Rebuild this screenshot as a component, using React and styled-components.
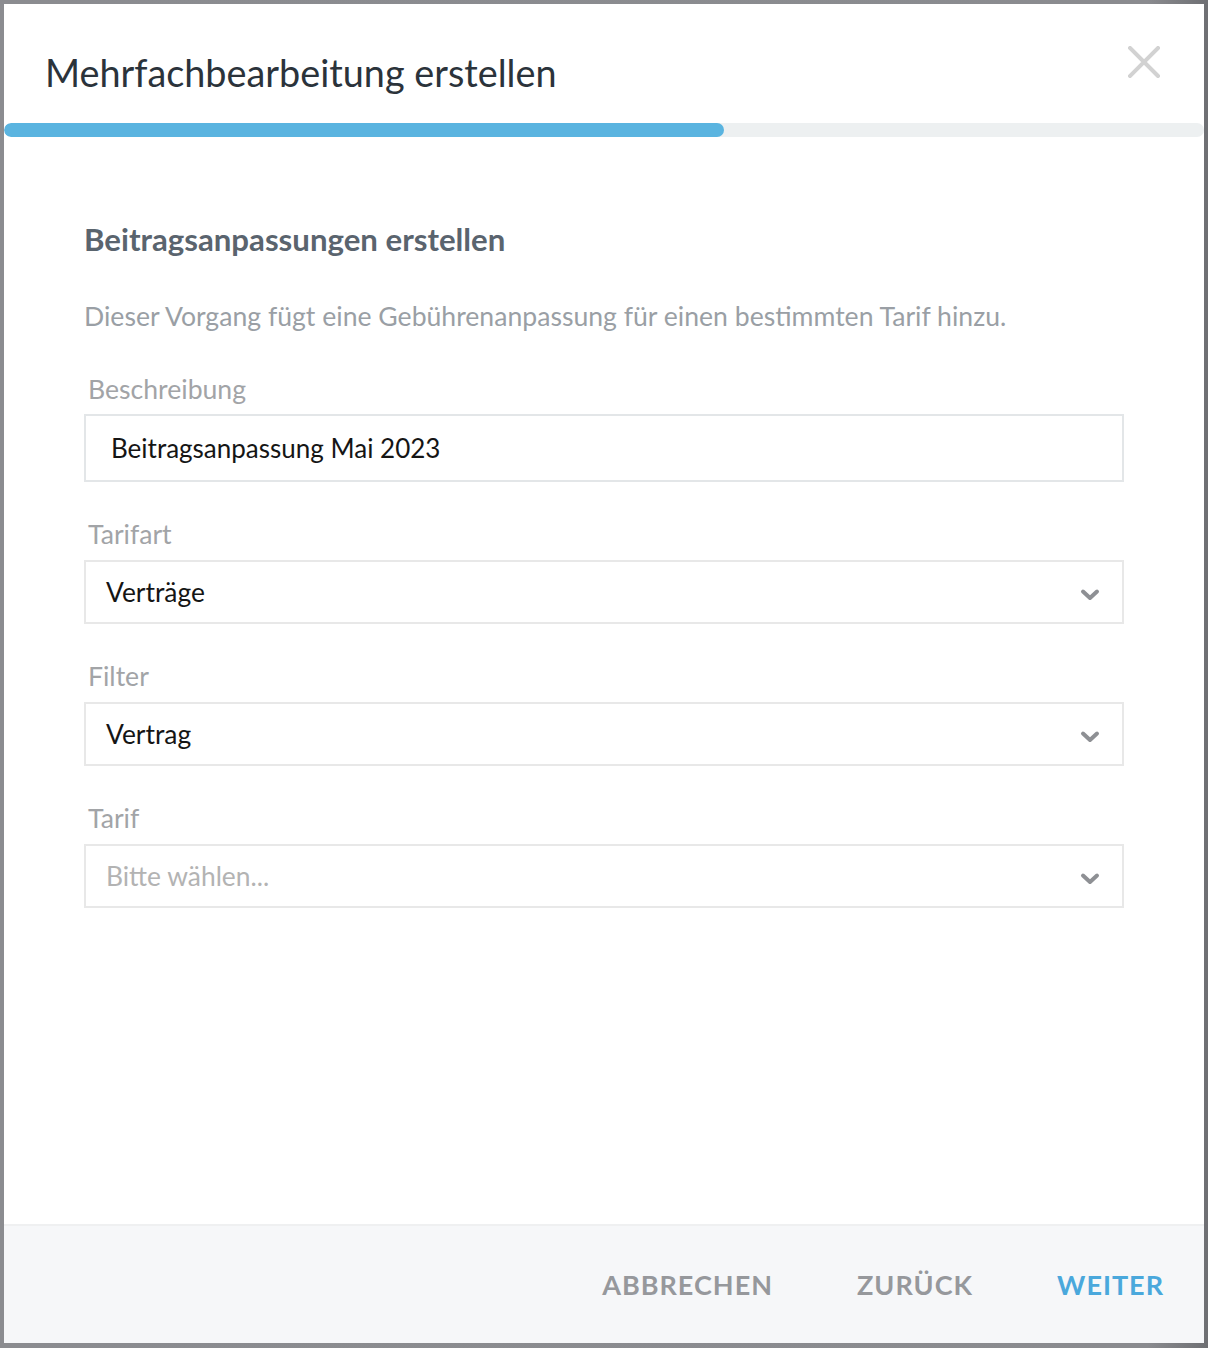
import React from "react";
import styled, { createGlobalStyle } from "styled-components";

const GlobalStyle = createGlobalStyle`
  html, body {
    margin: 0;
    padding: 0;
  }
  body {
    background: linear-gradient(90deg, #8b8c90 0%, #8a8b8f 95%, #6e6f73 100%);
    font-family: Lato, "Open Sans", sans-serif;
  }
`;

const Backdrop = styled.div`
  width: 1208px;
  height: 1348px;
  padding: 4px;
  box-sizing: border-box;
`;

const Modal = styled.div`
  display: flex;
  flex-direction: column;
  width: 1200px;
  height: 1339px;
  background: #ffffff;
`;

const Header = styled.div`
  display: flex;
  align-items: center;
  justify-content: space-between;
  height: 119px;
  padding: 0 40px 0 41px;
  box-sizing: border-box;
`;

const Title = styled.h1`
  margin: 0;
  font-size: 37.8px;
  line-height: 48px;
  font-weight: 400;
  color: #2b333b;
  transform: translateY(9px);
`;

const CloseButton = styled.button`
  display: flex;
  align-items: center;
  justify-content: center;
  width: 40px;
  height: 40px;
  margin-top: -4px;
  padding: 0;
  border: none;
  background: none;
  cursor: pointer;
`;

const Track = styled.div`
  height: 14px;
  border-radius: 7px;
  background: #edf0f1;
  overflow: hidden;
`;

const Fill = styled.div`
  height: 100%;
  border-radius: 7px;
  background: #5ab4e0;
`;

const Body = styled.div`
  flex: 1;
  padding: 84px 80px 0 80px;
`;

const Heading = styled.h2`
  margin: 0;
  font-size: 31.2px;
  line-height: 36px;
  font-weight: 700;
  color: #5a646e;
`;

const Description = styled.p`
  margin: 41px 0 0 0;
  font-size: 26.6px;
  line-height: 36px;
  color: #9a9fa5;
`;

const Field = styled.div`
  display: flex;
  flex-direction: column;
  margin-top: ${(p) => p.$gap}px;
`;

const Label = styled.label`
  padding-left: 4px;
  font-size: 26.6px;
  line-height: 36px;
  color: #a2a4a7;
`;

const TextInput = styled.div`
  display: flex;
  align-items: center;
  height: 68px;
  margin-top: 7px;
  padding: 0 25px;
  border: 2px solid #e3e6e8;
  box-sizing: border-box;
  font-size: 26px;
  color: #151515;
`;

const Select = styled.div`
  display: flex;
  align-items: center;
  justify-content: space-between;
  height: 64px;
  margin-top: 8px;
  padding: 0 22px 0 20px;
  border: 2px solid #e8e8e8;
  box-sizing: border-box;
  font-size: 26.4px;
  color: ${(p) => (p.$placeholder ? "#b3b3b3" : "#151515")};
`;

const ChevronBox = styled.span`
  display: flex;
  margin-top: 5px;
`;

const Footer = styled.div`
  display: flex;
  align-items: center;
  justify-content: flex-end;
  gap: 84px;
  height: 119px;
  padding-right: 40px;
  border-top: 2px solid #eff0f1;
  background: #f6f7f9;
  box-sizing: border-box;
`;

const FooterButton = styled.button`
  padding: 0;
  border: none;
  background: none;
  font-family: inherit;
  font-size: 27px;
  font-weight: 700;
  letter-spacing: 1px;
  color: ${(p) => (p.$primary ? "#4aa8dc" : "#96989c")};
  cursor: pointer;
`;

const Chevron = () => (
  <svg width="20" height="14" viewBox="0 0 20 14">
    <path
      d="M3 3.5 L10 10 L17 3.5"
      fill="none"
      stroke="#8e9094"
      strokeWidth="4"
      strokeLinecap="round"
      strokeLinejoin="round"
    />
  </svg>
);

const CloseIcon = () => (
  <svg width="32" height="32" viewBox="0 0 32 32">
    <path
      d="M2 2 L30 30 M30 2 L2 30"
      stroke="#d2d2d2"
      strokeWidth="4"
      strokeLinecap="square"
    />
  </svg>
);

const fields = [
  { label: "Tarifart", value: "Verträge" },
  { label: "Filter", value: "Vertrag" },
  { label: "Tarif", value: "Bitte wählen...", placeholder: true },
];

export default function App() {
  const progress = 60;
  return (
    <>
      <GlobalStyle />
      <Backdrop>
        <Modal>
          <Header>
            <Title>Mehrfachbearbeitung erstellen</Title>
            <CloseButton aria-label="Schließen">
              <CloseIcon />
            </CloseButton>
          </Header>
          <Track>
            <Fill style={{ width: `${progress}%` }} />
          </Track>
          <Body>
            <Heading>Beitragsanpassungen erstellen</Heading>
            <Description>
              Dieser Vorgang fügt eine Gebührenanpassung für einen bestimmten Tarif hinzu.
            </Description>
            <Field $gap={37}>
              <Label>Beschreibung</Label>
              <TextInput>Beitragsanpassung Mai 2023</TextInput>
            </Field>
            {fields.map((f) => (
              <Field key={f.label} $gap={34}>
                <Label>{f.label}</Label>
                <Select $placeholder={f.placeholder}>
                  <span>{f.value}</span>
                  <ChevronBox>
                    <Chevron />
                  </ChevronBox>
                </Select>
              </Field>
            ))}
          </Body>
          <Footer>
            <FooterButton>ABBRECHEN</FooterButton>
            <FooterButton>ZURÜCK</FooterButton>
            <FooterButton $primary>WEITER</FooterButton>
          </Footer>
        </Modal>
      </Backdrop>
    </>
  );
}
